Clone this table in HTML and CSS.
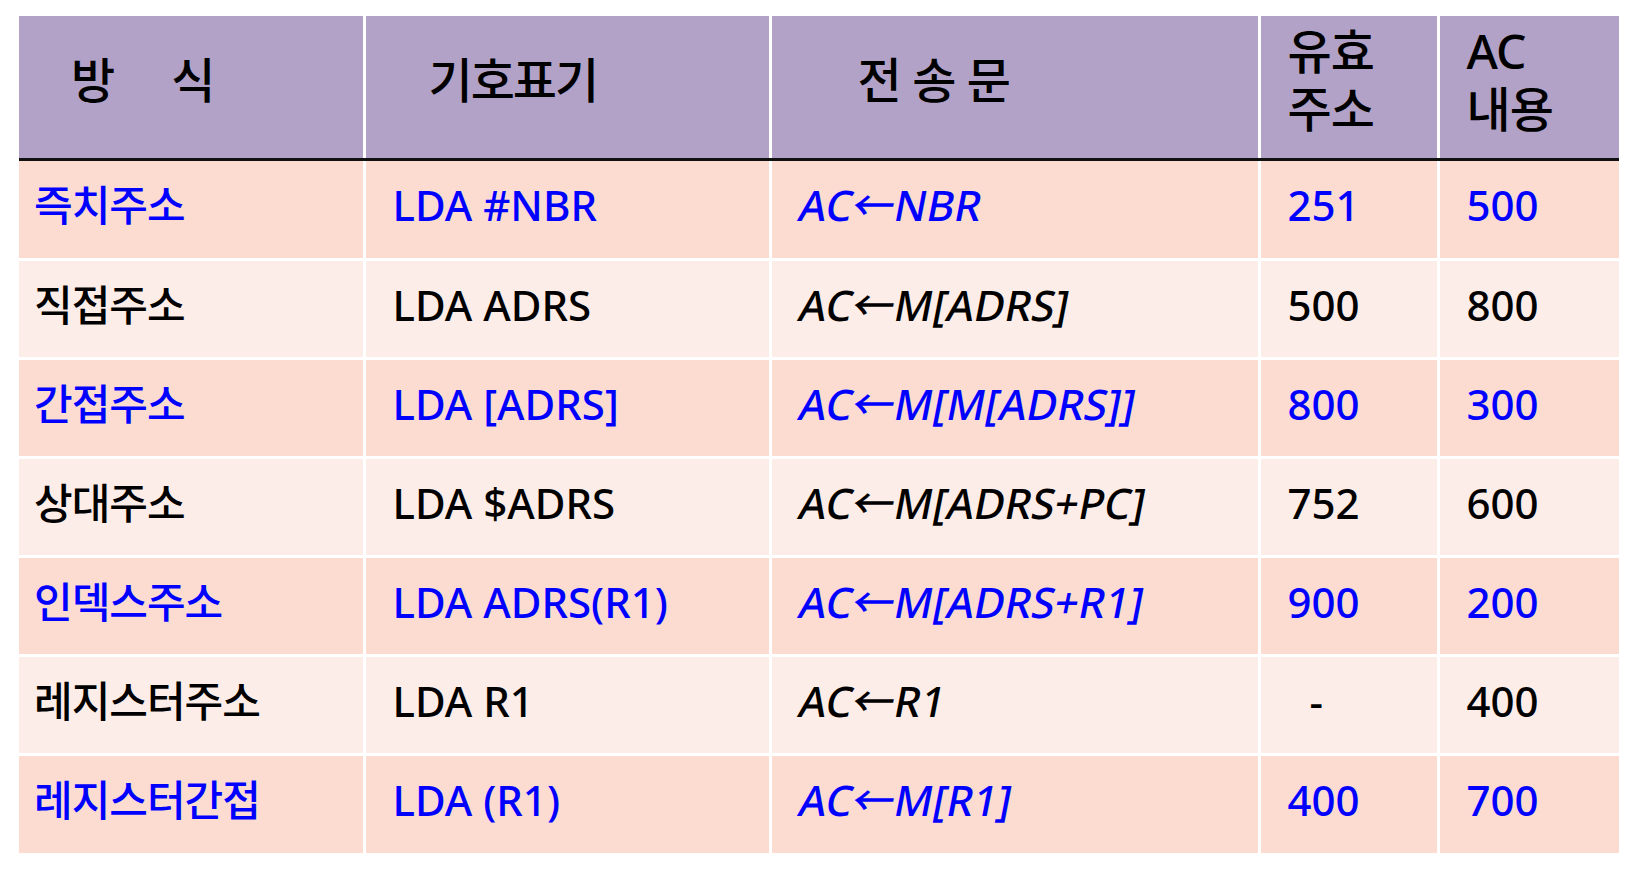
FILE: index.html
```html
<!DOCTYPE html>
<html lang="ko">
<head>
<meta charset="utf-8">
<title>주소 지정 방식</title>
<link rel="stylesheet" href="styles.css">
</head>
<body>
<table class="modes">
  <colgroup>
    <col class="c1"><col class="c2"><col class="c3"><col class="c4"><col class="c5">
  </colgroup>
  <thead>
    <tr>
      <th class="h-mode"><span class="w1">방</span><span>식</span></th>
      <th class="h-sym">기호표기</th>
      <th class="h-stmt">전 송 문</th>
      <th class="h-two">유효<br>주소</th>
      <th class="h-two">AC<br>내용</th>
    </tr>
  </thead>
  <tbody>
    <tr class="odd blue">
      <td class="k">즉치주소</td><td>LDA #NBR</td><td><span class="it">AC←NBR</span></td><td>251</td><td>500</td>
    </tr>
    <tr class="even">
      <td class="k">직접주소</td><td>LDA ADRS</td><td><span class="it">AC←M[ADRS]</span></td><td>500</td><td>800</td>
    </tr>
    <tr class="odd blue">
      <td class="k">간접주소</td><td>LDA [ADRS]</td><td><span class="it">AC←M[M[ADRS]]</span></td><td>800</td><td>300</td>
    </tr>
    <tr class="even">
      <td class="k">상대주소</td><td>LDA $ADRS</td><td><span class="it">AC←M[ADRS+PC]</span></td><td>752</td><td>600</td>
    </tr>
    <tr class="odd blue">
      <td class="k">인덱스주소</td><td>LDA ADRS(R1)</td><td><span class="it">AC←M[ADRS+R1]</span></td><td>900</td><td>200</td>
    </tr>
    <tr class="even">
      <td class="k">레지스터주소</td><td>LDA R1</td><td><span class="it">AC←R1</span></td><td class="dash">-</td><td>400</td>
    </tr>
    <tr class="odd blue">
      <td class="k">레지스터간접</td><td>LDA (R1)</td><td><span class="it">AC←M[R1]</span></td><td>400</td><td>700</td>
    </tr>
  </tbody>
</table>
</body>
</html>
```
FILE: styles.css
```css
html, body {
  margin: 0;
  padding: 0;
  background: #ffffff;
}

body {
  padding: 16px 0 0 19px;
  font-family: "Noto Sans", "Noto Sans CJK KR", sans-serif;
  color: #000;
}

.modes {
  border-collapse: collapse;
  table-layout: fixed;
  width: 1600px;
}

.c1 { width: 345px; }
.c2 { width: 406px; }
.c3 { width: 489px; }
.c4 { width: 179px; }
.c5 { width: 181px; }

.modes th,
.modes td {
  padding: 0;
  text-align: left;
  vertical-align: middle;
}

.modes th + th,
.modes td + td {
  border-left: 3px solid #ffffff;
}

.modes thead th {
  background: #b2a2c7;
  height: 143px;
  border-bottom: 3px solid #111111;
  font-size: 48px;
  font-weight: 500;
  line-height: 58px;
  letter-spacing: -2px;
  padding-bottom: 14px;
  box-sizing: border-box;
}

.modes thead th.h-mode { padding-left: 52px; }
.h-mode .w1 { margin-right: 58px; }
.modes thead th.h-sym { padding-left: 63px; }
.modes thead th.h-stmt { padding-left: 86px; word-spacing: 2px; }
.modes thead th.h-two { padding-left: 27px; padding-bottom: 14px; letter-spacing: -1px; }

.modes tbody tr + tr td {
  border-top: 3px solid #ffffff;
}

.modes tbody td {
  height: 99px;
  font-size: 42px;
  font-weight: 500;
  line-height: 50px;
  padding-left: 27px;
  padding-bottom: 8px;
  box-sizing: border-box;
}

.modes tbody td.k {
  padding-left: 15px;
  letter-spacing: -1px;
}

.modes tbody tr:first-child td {
  height: 100px;
}

.odd td { background: #fcdcd0; }
.even td { background: #fdede8; }
.blue td { color: #0000ff; }

.it {
  display: inline-block;
  transform: skewX(-11deg);
  transform-origin: 0 100%;
  margin-left: -4px;
}

.dash { text-indent: 22px; }
```
